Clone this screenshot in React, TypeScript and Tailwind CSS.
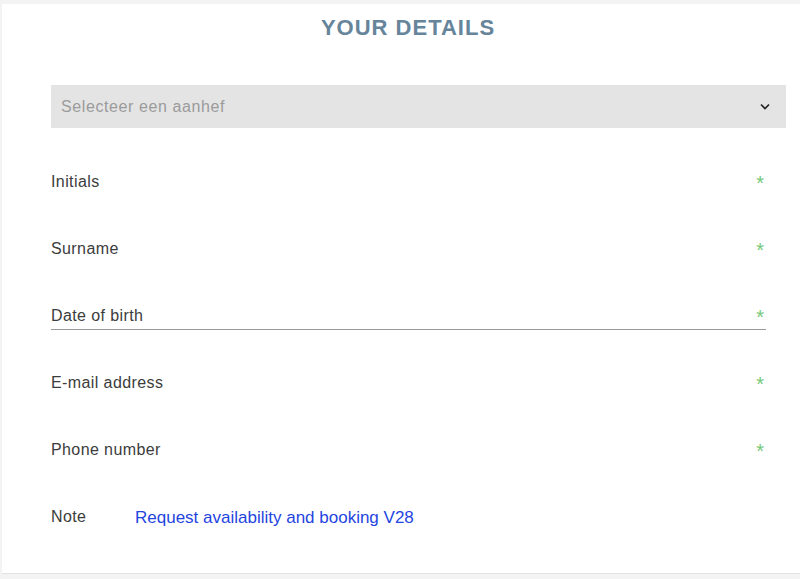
import React from "react";

function Row({ label, underline }: { label: string; underline?: boolean }) {
  return (
    <div
      className={`flex h-[28px] w-[715px] items-center justify-between ${
        underline ? "border-b border-[#9a9a9a]" : ""
      }`}
    >
      <span className="text-[16px] tracking-[0.4px] text-[#3c3c3c]">{label}</span>
      <span className="mr-[2px] mt-[2px] text-[20px] leading-none text-[#74c97a]">*</span>
    </div>
  );
}

export default function App() {
  return (
    <div
      className="h-[579px] w-[800px] overflow-hidden bg-[#f3f3f3] pl-[2px] pt-[4px]"
      style={{ fontFamily: '"Liberation Sans", Arial, sans-serif' }}
    >
      <div className="h-[570px] w-[820px] border-b border-[#e2e2e2] bg-white">
        <h1 className="pt-[11px] pl-[12px] text-center text-[22px] font-black leading-[26px] tracking-[1px] text-[#66849a] w-[800px]">
          YOUR DETAILS
        </h1>
        <div className="ml-[49px] mt-[44px] flex h-[43px] w-[735px] items-center justify-between bg-[#e4e4e4] pl-[10px] pr-[16px]">
          <span className="text-[16px] tracking-[0.6px] text-[#9b9b9b]">Selecteer een aanhef</span>
          <svg width="10" height="7" viewBox="0 0 10 7" fill="none">
            <path d="M1 1.5L5 5.5L9 1.5" stroke="#222" strokeWidth="1.6" />
          </svg>
        </div>
        <div className="ml-[49px] mt-[40px] flex flex-col gap-[39px]">
          <Row label="Initials" />
          <Row label="Surname" />
          <Row label="Date of birth" underline />
          <Row label="E-mail address" />
          <Row label="Phone number" />
          <div className="flex h-[28px] items-center">
            <span className="w-[84px] text-[16px] tracking-[0.4px] text-[#3c3c3c]">Note</span>
            <span className="mt-[2px] text-[17px] text-[#1f45df]">Request availability and booking V28</span>
          </div>
        </div>
      </div>
    </div>
  );
}
